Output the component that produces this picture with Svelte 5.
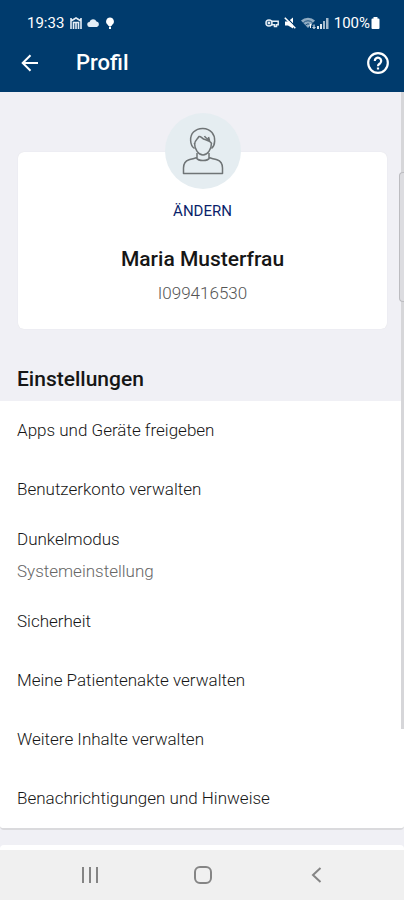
<script>
  let user = {
    name: 'Maria Musterfrau',
    id: 'I099416530',
  };

  let settings = [
    {title: 'Apps und Geräte freigeben'},
    {title: 'Benutzerkonto verwalten'},
    {title: 'Dunkelmodus', value: 'Systemeinstellung'},
    {title: 'Sicherheit'},
    {title: 'Meine Patientenakte verwalten'},
    {title: 'Weitere Inhalte verwalten'},
    {title: 'Benachrichtigungen und Hinweise'},
  ];
</script>

<div class="screen">
  <header>
    <div class="status">
      <span>19:33</span>
      <svg class="first" width="12" height="12" viewBox="0 0 12 12" fill="none" stroke="#e4edf5">
        <path d="M1 12V1M11 12V1M1 4l5-3 5 3M3.500 12V5.500h5V12M6 6v6" stroke-width="1.600"/>
      </svg>
      <svg width="13" height="12" viewBox="0 0 13 12" fill="#e4edf5">
        <path d="M3 10a2.500 2.500 0 0 1-.5-5 3.800 3.800 0 0 1 7-.6A2.900 2.900 0 0 1 10 10z"/>
      </svg>
      <svg class="bulb" width="10" height="12" viewBox="0 0 10 12" fill="#fff">
        <path d="M5 .5a4 4 0 0 1 2 7.400L6.500 9h-3L3 7.900A4 4 0 0 1 5 .5zM4 9.500h2V12H4z"/>
      </svg>

      <div class="right">
        <svg width="15" height="12" viewBox="0 0 15 12" fill="none" stroke="#e4edf5" stroke-width="1.500">
          <circle cx="4" cy="6" r="3"/>
          <circle cx="4" cy="6" r=".7"/>
          <path d="M6.500 4.200h6.700v3.600h-1.700v1.700H9.500V7.800h-3"/>
        </svg>
        <svg class="mute" width="12" height="12" viewBox="0 0 12 12" fill="#fff">
          <path d="M1 4.500h3L9 .5V11.500L4 8.500H1z"/>
          <path d="M2 0l10 10" stroke="#003b6d" stroke-width="1.200"/>
          <path d="M.8 .8l10.500 10.500" stroke="#fff" stroke-width="1.600"/>
        </svg>
        <svg class="wifi" width="16" height="12" viewBox="0 0 16 12">
          <path d="M0 3.500a10 10 0 0 1 14 0L7 11z" fill="#8fabc2"/>
          <path d="M2.300 5.800a6.500 6.500 0 0 1 9.400 0M4.500 8a3.500 3.500 0 0 1 5 0" fill="none" stroke="#003b6d" stroke-width=".8"/>
          <path d="M9.500 11V7M8 8.500L9.500 7 11 8.500M13 7.500v4M11.500 10l1.500 1.500 1.500-1.500" fill="none" stroke="#fff"/>
        </svg>
        <svg width="12" height="12" viewBox="0 0 12 12">
          <path d="M0 9h2v3H0zM3 7h2v5H3z" fill="#dce6ee"/>
          <path d="M6 4h2v8H6zM9 1h2.500v11H9z" fill="#a3b9cc"/>
        </svg>
        <span class="percent">100%</span>
        <svg width="9" height="12" viewBox="0 0 9 12" fill="#fff">
          <path d="M2.500 0h4v1.500h1q1 0 1 1V11q0 1-1 1h-6q-1 0-1-1V2.500q0-1 1-1h1z"/>
        </svg>
      </div>
    </div>

    <div class="bar">
      <button class="icon" aria-label="Zurück">
        <svg width="20" height="20" viewBox="0 0 20 20" fill="none" stroke="#fff" stroke-width="2">
          <path d="M18 10H3M10.500 2.200L2.700 10l7.800 7.800"/>
        </svg>
      </button>
      <h1>Profil</h1>
      <button class="icon" aria-label="Hilfe">
        <svg width="22" height="22" viewBox="0 0 22 22" fill="none" stroke="#fff" stroke-width="2.200">
          <circle cx="11" cy="11" r="9.800"/>
          <path d="M7.800 9a3.200 3.200 0 1 1 5.300 2.300C12 12.200 11 12.600 11 14.200M11 15.500v2"/>
        </svg>
      </button>
    </div>
  </header>

  <main>
    <section class="card">
      <div class="avatar">
        <svg width="42" height="48" viewBox="0 0 42 48" fill="none" stroke="#6f7476" stroke-width="1.500" stroke-linejoin="round">
          <path d="M15 26v4.500c-2 1-5 1.200-8 2.300-4 1.400-5.500 4.200-5.500 8.200v5.500h39V41c0-4-1.500-6.800-5.500-8.200-3-1.100-6-1.300-8-2.300V26"/>
          <path d="M14.500 31c2 3.300 11 3.300 13 0"/>
          <path d="M12.500 16c0 6.500 4 12 8.500 12s8.500-5.500 8.500-12"/>
          <path d="M12.500 21.500C7.500 18 7.500 9 11.500 5c5-5 14-4.800 18.500.5 3.800 4.500 3.500 12.500-.5 16"/>
          <path d="M12.500 17c.3-3.500 2.500-4.500 4.500-7.500 2-.8 3 2.500 6 3 2 1 4 .8 6.500 3.500M22.500 9c1 2.500 3.500 2.500 5 4.500l-1-3.500"/>
        </svg>
      </div>
      <button class="change">ÄNDERN</button>
      <h2>{user.name}</h2>
      <p>{user.id}</p>
    </section>

    <h2 class="heading">Einstellungen</h2>

    <ul>
      {#each settings as item}
        <li>
          <button class="row">
            <span>{item.title}</span>
            {#if item.value}
              <span class="value">{item.value}</span>
            {/if}
          </button>
        </li>
      {/each}
    </ul>

    <div class="next"></div>

    <div class="scrollbar"></div>
    <div class="edge"></div>
  </main>

  <nav>
    <button aria-label="Letzte Apps">
      <svg width="18" height="18" viewBox="0 0 18 18" fill="none" stroke="#858585" stroke-width="2">
        <path d="M2 1v16M9 1v16M16 1v16"/>
      </svg>
    </button>
    <button aria-label="Startbildschirm">
      <svg width="18" height="18" viewBox="0 0 18 18" fill="none" stroke="#858585" stroke-width="2">
        <rect x="1" y="1" width="16" height="16" rx="5"/>
      </svg>
    </button>
    <button aria-label="Zurück">
      <svg width="18" height="18" viewBox="0 0 18 18" fill="none" stroke="#858585" stroke-width="2">
        <path d="M13.500 2L6 9l7.500 7"/>
      </svg>
    </button>
  </nav>
</div>

<style>
  :global(body){
    margin: 0;
    background-color: #f0f0f5;
  }

  .screen{
    min-height: 100vh;
    display: flex;
    flex-direction: column;
    font-family: Roboto, sans-serif;
    color: #161616;
  }

  button{
    padding: 0;
    border: 0;
    background: none;
    font: inherit;
    color: inherit;
    cursor: pointer;
  }

  svg{
    display: block;
    flex-shrink: 0;
  }

  h1, h2, p, ul{
    margin: 0;
    padding: 0;
    font-weight: 500;
  }


  /* HEADER */

  header{
    padding: 12px 14px 0 18px;
    background-color: #003b6d;
    color: #fff;
  }

  .status{
    display: flex;
    align-items: center;
    height: 22px;
    padding: 0 10px 0 9px;
    font-size: 15px;
  }

  .status .first{
    margin: 0 5px 0 6px;
  }

  .status .bulb{
    margin-left: 5px;
  }

  .right{
    display: flex;
    align-items: center;
    margin-left: auto;
  }

  .mute{
    margin: 0 5px 0 4px;
  }

  .percent{
    margin: 0 1px 0 5px;
  }

  .bar{
    display: flex;
    align-items: center;
    height: 58px;
  }

  .icon{
    width: 24px;
    height: 24px;
    display: grid;
    place-items: center;
  }

  .bar h1{
    flex: 1;
    margin-left: 34px;
    font-size: 22px;
    line-height: 28px;
  }


  /* PROFILE */

  main{
    flex: 1;
    display: flex;
    flex-direction: column;
    position: relative;
  }

  .card{
    display: flex;
    flex-direction: column;
    align-items: center;
    margin: 60px 17px 0 18px;
    padding-bottom: 24px;
    border-radius: 6px;
    background-color: #fff;
    box-shadow: 0 0 1px #d8d8de;
  }

  .avatar{
    display: grid;
    place-items: center;
    width: 76px;
    height: 76px;
    margin-top: -39px;
    border-radius: 50%;
    background-color: #e5edf1;
  }

  .change{
    margin-top: 12px;
    font-size: 15px;
    line-height: 20px;
    color: #0b1f6b;
  }

  .card h2{
    margin-top: 24px;
    font-size: 21px;
    line-height: 28px;
  }

  .card p{
    margin-top: 8px;
    font-size: 17px;
    line-height: 24px;
    font-weight: 300;
    color: #555;
  }

  .heading{
    margin: 36px 17px 8px;
    font-size: 21px;
    line-height: 28px;
  }


  /* SETTINGS */

  ul{
    list-style: none;
    background-color: #fff;
    border-bottom: 2px solid #dadadd;
    border-radius: 0 0 4px 4px;
  }

  .row{
    display: flex;
    flex-direction: column;
    justify-content: center;
    width: 100%;
    min-height: 59px;
    padding: 4px 17px 5px;
    box-sizing: border-box;
    text-align: left;
    font-size: 17px;
    line-height: 32px;
    font-weight: 300;
  }

  .value{
    color: #666;
  }

  .next{
    flex: 1;
    min-height: 4px;
    margin-top: 15px;
    border-radius: 4px 4px 0 0;
    background-color: #fff;
  }

  .scrollbar{
    position: absolute;
    top: 0;
    right: 0;
    width: 3px;
    height: 84%;
    background-color: #d6d6d9;
  }

  /* edge panel handle of the phone */
  .edge{
    position: absolute;
    top: 80px;
    right: 0;
    width: 4px;
    height: 128px;
    border: 1px solid #bcbcc0;
    border-right: 0;
    border-radius: 4px 0 0 4px;
    background-color: #dcdce0;
  }


  /* NAVIGATION */

  nav{
    display: flex;
    justify-content: center;
    height: 50px;
    padding: 0 32px 0 34px;
    background-color: #f0f0f0;
  }

  nav button{
    flex: 1;
    display: grid;
    place-items: center;
  }
</style>
